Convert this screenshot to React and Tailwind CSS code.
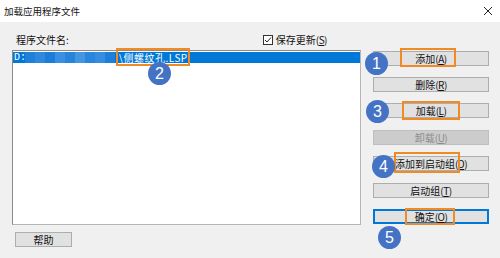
const font = { fontFamily: '"Noto Sans CJK SC", "Liberation Sans", sans-serif' }

const Btn = ({ children, disabled, primary, className = "" }) => (
  <div
    className={
      "h-[15px] w-[116px] flex items-center justify-center text-[10px] leading-none " +
      (disabled
        ? "bg-[#cccccc] border border-[#bfbfbf] text-[#8c8c8c] "
        : primary
        ? "bg-[#e1e1e1] border-2 border-[#0078d7] text-[#111] "
        : "bg-[#e1e1e1] border border-[#adadad] text-[#111] ") +
      className
    }
  >
    {children}
  </div>
)

const Key = ({ k }) => (
  <span className="tracking-[-0.5px]">
    (<u>{k}</u>)
  </span>
)

const Circle = ({ n, className }) => (
  <div
    className={
      "absolute w-[23px] h-[23px] rounded-full bg-[#4472c4] text-white flex items-center justify-center text-[16px] " +
      className
    }
    style={{ fontFamily: '"Liberation Sans", Arial, sans-serif' }}
  >
    {n}
  </div>
)

const Box = ({ className }) => (
  <div className={"absolute border-2 border-[#f08a24] " + className} />
)

const mosaic = ["#1f80d9", "#2f88dc", "#1b7dd8", "#3a8fe0", "#2884db", "#4496e2", "#2a86dc", "#358ddf", "#1e7fd9"]

export default function App() {
  return (
    <div className="relative w-[500px] h-[258px] bg-[#f0f0f0] overflow-hidden text-[#111]" style={font}>
      {/* title bar */}
      <div className="h-[22px] bg-white flex items-center justify-between pl-[4px] pr-[7px]">
        <span className="text-[9.5px]">加载应用程序文件</span>
        <svg width="10" height="10" viewBox="0 0 10 10">
          <path d="M1 1 L9 9 M9 1 L1 9" stroke="#222" strokeWidth="1" />
        </svg>
      </div>

      <div className="flex pl-[12px]">
        {/* left */}
        <div className="w-[349px] flex flex-col">
          <div className="h-[28px] flex items-end pb-[2px] text-[10px] leading-none">
            <span className="ml-[4px] mb-[3px]">程序文件名:</span>
            <div className="ml-auto mr-[34px] flex items-center gap-[3px] mb-[3px]">
              <div className="w-[10px] h-[10px] border border-[#333] bg-white flex items-center justify-center">
                <svg width="8" height="8" viewBox="0 0 8 8">
                  <path d="M1 4 L3 6 L7 1.5" stroke="#222" strokeWidth="1" fill="none" />
                </svg>
              </div>
              <span>
                保存更新<Key k="S" />
              </span>
            </div>
          </div>
          <div className="h-[175px] bg-white border border-[#b5b5b5] border-l-[#8a8a8a] border-t-[#8a8a8a] pt-[1px]">
            <div className="h-[11px] bg-[#0078d7] flex items-center text-white text-[10px] leading-none">
              <span className="ml-[1px] w-[11px]" style={{ fontFamily: '"Liberation Mono", monospace' }}>D:</span>
              <div className="flex h-full">
                {mosaic.map((c, i) => (
                  <div key={i} className="w-[10px] h-full" style={{ background: c }} />
                ))}
              </div>
              <span className="ml-[4px] tracking-[0.5px]">\侧螺纹孔.LSP</span>
            </div>
          </div>
          <div className="mt-[7px] ml-[3px] w-[57px] h-[15px] bg-[#e1e1e1] border border-[#adadad] flex items-center justify-center text-[10px] leading-none">
            帮助
          </div>
        </div>

        {/* right */}
        <div className="ml-[12px] pt-[29px] flex flex-col">
          <Btn>
            添加<Key k="A" />
          </Btn>
          <Btn className="mt-[11px]">
            删除<Key k="R" />
          </Btn>
          <Btn className="mt-[11px]">
            加载<Key k="L" />
          </Btn>
          <Btn disabled className="mt-[12px]">
            卸载<Key k="U" />
          </Btn>
          <Btn className="mt-[11px]">
            添加到启动组<Key k="D" />
          </Btn>
          <Btn className="mt-[12px]">
            启动组<Key k="T" />
          </Btn>
          <Btn primary className="mt-[11px]">
            确定<Key k="O" />
          </Btn>
        </div>
      </div>

      {/* annotations */}
      <Box className="left-[116px] top-[48px] w-[74px] h-[18px]" />
      <Box className="left-[400px] top-[48px] w-[56px] h-[19px]" />
      <Box className="left-[402px] top-[101px] w-[58px] h-[19px]" />
      <Box className="left-[394px] top-[152px] w-[66px] h-[21px]" />
      <Box className="left-[405px] top-[208px] w-[50px] h-[17px]" />
      <Circle n="1" className="left-[365px] top-[52px]" />
      <Circle n="2" className="left-[148px] top-[62px]" />
      <Circle n="3" className="left-[366px] top-[100px]" />
      <Circle n="4" className="left-[372px] top-[155px]" />
      <Circle n="5" className="left-[378px] top-[226px]" />
    </div>
  )
}
